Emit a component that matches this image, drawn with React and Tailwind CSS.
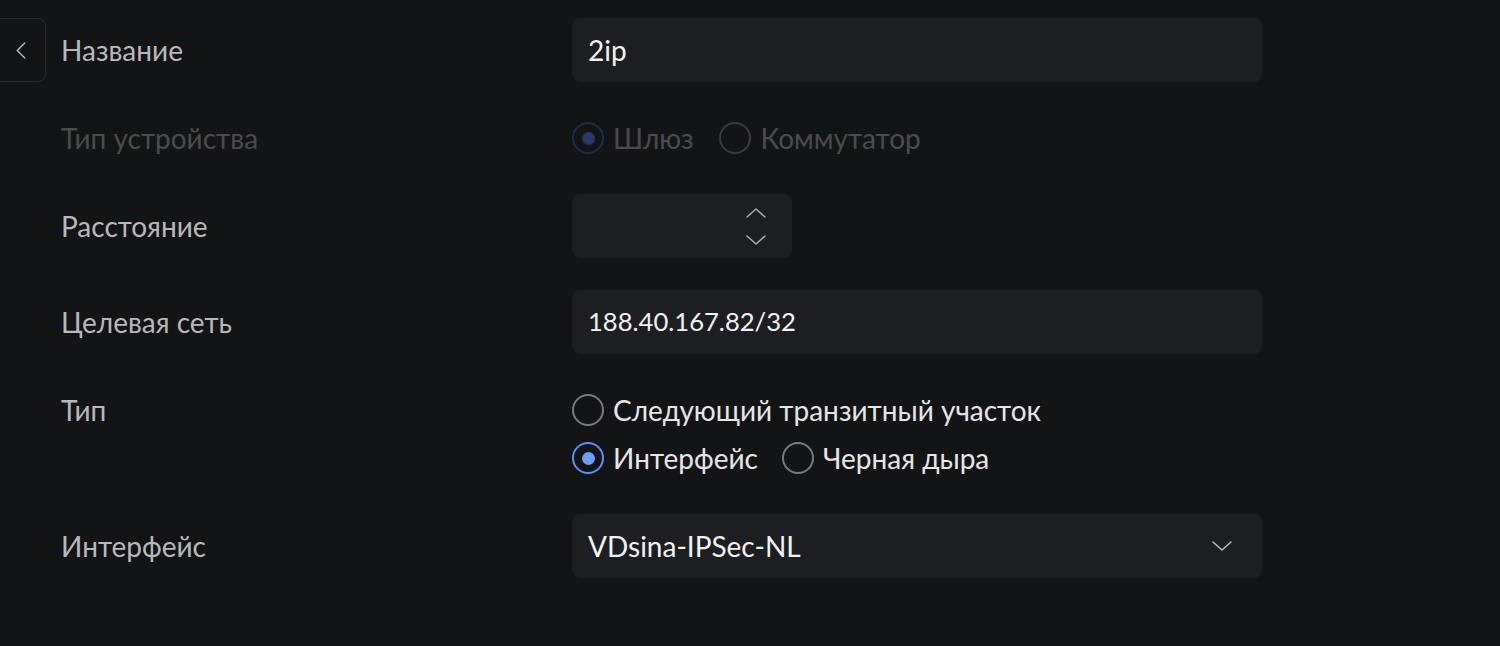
import React from "react";

const Radio = ({ checked, disabled, label }) => {
  const ring = disabled
    ? checked
      ? "border-[#1f2d4d]"
      : "border-[#3a3b3f]"
    : checked
    ? "border-[#5b8ff0]"
    : "border-[#7a7b80]";
  const dot = disabled ? "bg-[#243a68]" : "bg-[#6c9ef6]";
  const text = disabled ? "text-[#4a4b4f]" : "text-[#e6e6e8]";
  return (
    <label className="flex items-center gap-[9px]">
      <span className={`flex h-[32px] w-[32px] items-center justify-center rounded-full border-2 ${ring}`}>
        {checked && <span className={`h-[13px] w-[13px] rounded-full ${dot}`} />}
      </span>
      <span className={`${text}`}>{label}</span>
    </label>
  );
};

const Label = ({ children, disabled }) => (
  <div className={`flex h-[64px] w-[511px] shrink-0 items-center ${disabled ? "text-[#4a4b4f]" : "text-[#b8b8bc]"}`}>
    {children}
  </div>
);

const Chevron = ({ dir = "down", className }) => (
  <svg viewBox="0 0 20 10" className={className} fill="none" stroke="currentColor" strokeWidth="1.6" strokeLinecap="round" strokeLinejoin="round">
    {dir === "down" ? <path d="M1 1 L10 9 L19 1" /> : <path d="M1 9 L10 1 L19 9" />}
  </svg>
);

export default function App() {
  return (
    <div
      className="min-h-[646px] w-full bg-[#131416] text-[28px] leading-none"
      style={{ fontFamily: "Lato, 'Noto Sans', sans-serif" }}
    >
      <div className="flex pt-[18px]">
        <div className="w-[61px] shrink-0">
          <div className="-ml-[18px] flex h-[64px] w-[64px] items-center justify-end rounded-[8px] border border-[#2b2c30] pr-[19px] text-[#b8b8bc]">
            <svg viewBox="0 0 10 18" className="h-[17px] w-[10px]" fill="none" stroke="currentColor" strokeWidth="1.5" strokeLinecap="round" strokeLinejoin="round">
              <path d="M9 1 L1 9 L9 17" />
            </svg>
          </div>
        </div>
        <div className="flex flex-col">
          <div className="flex">
            <Label>Название</Label>
            <div className="flex h-[64px] w-[690px] items-center rounded-[8px] bg-[#1d1e21] px-[16px] text-[#f2f2f4]">2ip</div>
          </div>
          <div className="mt-[24px] flex">
            <Label disabled>Тип устройства</Label>
            <div className="flex h-[64px] items-center gap-[26px]">
              <Radio checked disabled label="Шлюз" />
              <Radio disabled label="Коммутатор" />
            </div>
          </div>
          <div className="mt-[24px] flex">
            <Label>Расстояние</Label>
            <div className="flex h-[64px] w-[220px] items-center justify-end rounded-[8px] bg-[#1d1e21] pr-[26px] text-[#a8a8ac]">
              <div className="flex flex-col items-center gap-[17px]">
                <Chevron dir="up" className="h-[10px] w-[20px]" />
                <Chevron dir="down" className="h-[10px] w-[20px]" />
              </div>
            </div>
          </div>
          <div className="mt-[32px] flex">
            <Label>Целевая сеть</Label>
            <div className="flex h-[64px] w-[690px] items-center rounded-[8px] bg-[#1d1e21] px-[16px] text-[25.6px] text-[#f2f2f4]">188.40.167.82/32</div>
          </div>
          <div className="mt-[24px] flex">
            <div className="w-[511px] shrink-0">
              <Label>Тип</Label>
            </div>
            <div className="flex flex-col pt-[8px]">
              <div className="flex h-[48px] items-center">
                <Radio label="Следующий транзитный участок" />
              </div>
              <div className="flex h-[48px] items-center gap-[24px]">
                <Radio checked label="Интерфейс" />
                <Radio label="Черная дыра" />
              </div>
            </div>
          </div>
          <div className="mt-[32px] flex">
            <Label>Интерфейс</Label>
            <div className="flex h-[64px] w-[690px] items-center justify-between rounded-[8px] bg-[#1d1e21] pl-[16px] pr-[30px] text-[#f2f2f4]">
              <span>VDsina-IPSec-NL</span>
              <Chevron className="h-[10px] w-[20px] text-[#b8b8bc]" />
            </div>
          </div>
        </div>
      </div>
    </div>
  );
}
